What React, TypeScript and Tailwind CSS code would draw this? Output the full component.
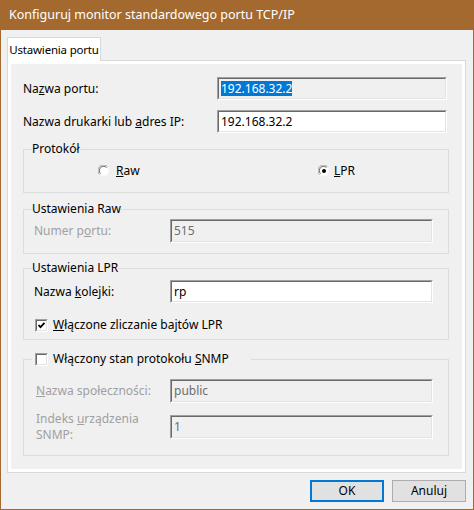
import React from "react";

const sunkenOuter = "border border-t-[#a0a0a0] border-l-[#a0a0a0] border-b-white border-r-white";
const sunkenInner = "border border-t-[#696969] border-l-[#696969] border-b-[#e3e3e3] border-r-[#e3e3e3]";

function Key({ children }: { children: React.ReactNode }) {
  return <span className="underline decoration-1 underline-offset-1">{children}</span>;
}

function TextBox({
  value,
  disabled,
  selected,
  className = "",
}: {
  value: string;
  disabled?: boolean;
  selected?: boolean;
  className?: string;
}) {
  return (
    <div className={`${sunkenOuter} ${className}`}>
      <div
        className={`${sunkenInner} h-full flex items-center pl-[2px] ${
          disabled ? "bg-[#f0f0f0] text-[#6d6d6d]" : "bg-white text-black"
        }`}
      >
        {selected ? <span className="bg-[#0078d7] text-white leading-[15px]">{value}</span> : value}
      </div>
    </div>
  );
}

function CheckBox({ checked }: { checked?: boolean }) {
  return (
    <div className={`w-[13px] h-[13px] shrink-0 ${sunkenOuter}`}>
      <div className={`w-full h-full bg-white ${sunkenInner}`}>
        {checked && (
          <svg width="9" height="9" viewBox="0 0 9 9" className="block">
            <path d="M1.5 4 L3.5 6.2 L7.5 1.8" stroke="#000" strokeWidth="1.8" fill="none" />
          </svg>
        )}
      </div>
    </div>
  );
}

function Radio({ checked }: { checked?: boolean }) {
  return (
    <svg width="12" height="12" viewBox="0 0 12 12" className="shrink-0">
      <circle cx="6" cy="6" r="5.5" fill="#fff" />
      <path d="M1.6 9.6 A5.2 5.2 0 0 1 9.6 1.6" stroke="#a0a0a0" strokeWidth="1" fill="none" />
      <path d="M2.6 8.6 A4 4 0 0 1 8.6 2.6" stroke="#696969" strokeWidth="1" fill="none" />
      <path d="M9.6 1.6 A5.2 5.2 0 0 1 1.6 9.6" stroke="#f0f0f0" strokeWidth="1" fill="none" />
      {checked && <circle cx="6" cy="6" r="2" fill="#000" />}
    </svg>
  );
}

function Group({
  legend,
  className = "",
  children,
}: {
  legend: React.ReactNode;
  className?: string;
  children: React.ReactNode;
}) {
  return (
    <fieldset className={`border border-[#dcdcdc] w-[426px] ${className}`}>
      <legend className="ml-[8px] h-[16px] leading-[16px] flex items-center">{legend}</legend>
      {children}
    </fieldset>
  );
}

function App() {
  return (
    <div className="w-[474px] h-[510px] flex flex-col bg-[#a3692f] px-px pb-px font-['Noto_Sans',sans-serif] text-[12px] text-black leading-[16px]">
      {/* Title bar */}
      <div className="h-[30px] shrink-0 flex items-center pl-[8px] text-white text-[12.5px]">
        Konfiguruj monitor standardowego portu TCP/IP
      </div>

      {/* Body */}
      <div className="flex-1 bg-[#f0f0f0] pl-[6px] pr-[7px] pt-[7px] flex flex-col">
        {/* Tab */}
        <div className="flex">
          <div className="relative z-10 -mb-px w-[94px] h-[24px] bg-white border border-b-0 border-[#d9d9d9] flex items-center justify-center whitespace-nowrap text-[11.5px] tracking-[-0.2px]">
            Ustawienia portu
          </div>
        </div>

        {/* Tab page */}
        <div className="h-[413px] border border-[#d9d9d9] bg-white p-[3px] flex">
          <div className="flex-1 bg-[#f0f0f0] pl-[12px] pt-[13px] flex flex-col">
            <div className="flex items-center h-[23px]">
              <div className="w-[194px]">
                Na<Key>z</Key>wa portu:
              </div>
              <TextBox value="192.168.32.2" disabled selected className="w-[230px] h-[23px]" />
            </div>
            <div className="flex items-center h-[23px] mt-[10px]">
              <div className="w-[194px]">
                Nazwa drukarki lub <Key>a</Key>dres IP:
              </div>
              <TextBox value="192.168.32.2" className="w-[230px] h-[23px]" />
            </div>

            {/* Protokół */}
            <Group legend="Protokół" className="mt-[8px] pt-[6px] pb-[13px]">
              <div className="flex items-center h-[16px]">
                <div className="flex items-center gap-[6px] ml-[74px] w-[220px]">
                  <Radio />
                  <span>
                    <Key>R</Key>aw
                  </span>
                </div>
                <div className="flex items-center gap-[4px]">
                  <Radio checked />
                  <span>
                    <Key>L</Key>PR
                  </span>
                </div>
              </div>
            </Group>

            {/* Ustawienia Raw */}
            <Group legend="Ustawienia Raw" className="mt-[8px] pt-[2px] pb-[10px]">
              <div className="flex items-center h-[24px] pl-[10px]">
                <div className="w-[136px] text-[#a0a0a0]">
                  Numer p<Key>o</Key>rtu:
                </div>
                <TextBox value="515" disabled className="w-[263px] h-[24px]" />
              </div>
            </Group>

            {/* Ustawienia LPR */}
            <Group legend="Ustawienia LPR" className="mt-[6px] pt-[4px] pb-[6px]">
              <div className="flex items-center h-[23px] pl-[10px]">
                <div className="w-[136px]">
                  Nazwa <Key>k</Key>olejki:
                </div>
                <TextBox value="rp" className="w-[263px] h-[23px]" />
              </div>
              <div className="flex items-center h-[16px] mt-[14px] pl-[11px] gap-[5px]">
                <CheckBox checked />
                <span>
                  <Key>W</Key>łączone zliczanie bajtów LPR
                </span>
              </div>
            </Group>

            {/* SNMP */}
            <Group
              className="mt-[11px] pt-[12px] pb-[16px]"
              legend={
                <span className="flex items-center gap-[5px] ml-[3px] pr-[22px]">
                  <CheckBox />
                  <span>
                    Włączony stan protokołu <Key>S</Key>NMP
                  </span>
                </span>
              }
            >
              <div className="flex items-center h-[24px] pl-[12px]">
                <div className="w-[134px] text-[#a0a0a0]">
                  <Key>N</Key>azwa społeczności:
                </div>
                <TextBox value="public" disabled className="w-[263px] h-[24px]" />
              </div>
              <div className="flex items-center h-[24px] mt-[12px] pl-[12px]">
                <div className="w-[134px] text-[#a0a0a0] leading-[16px] flex flex-col">
                  <span>
                    Indeks <Key>u</Key>rządzenia
                  </span>
                  <span>SNMP:</span>
                </div>
                <TextBox value="1" disabled className="w-[263px] h-[24px]" />
              </div>
            </Group>
          </div>
        </div>

        {/* Buttons */}
        <div className="flex justify-end gap-[8px] mt-[7px]">
          <button className="w-[74px] h-[22px] bg-[#e1e1e1] border-2 border-[#0078d7]">OK</button>
          <button className="w-[74px] h-[22px] bg-[#e1e1e1] border border-[#adadad]">Anuluj</button>
        </div>
      </div>
    </div>
  );
}

export default App;
